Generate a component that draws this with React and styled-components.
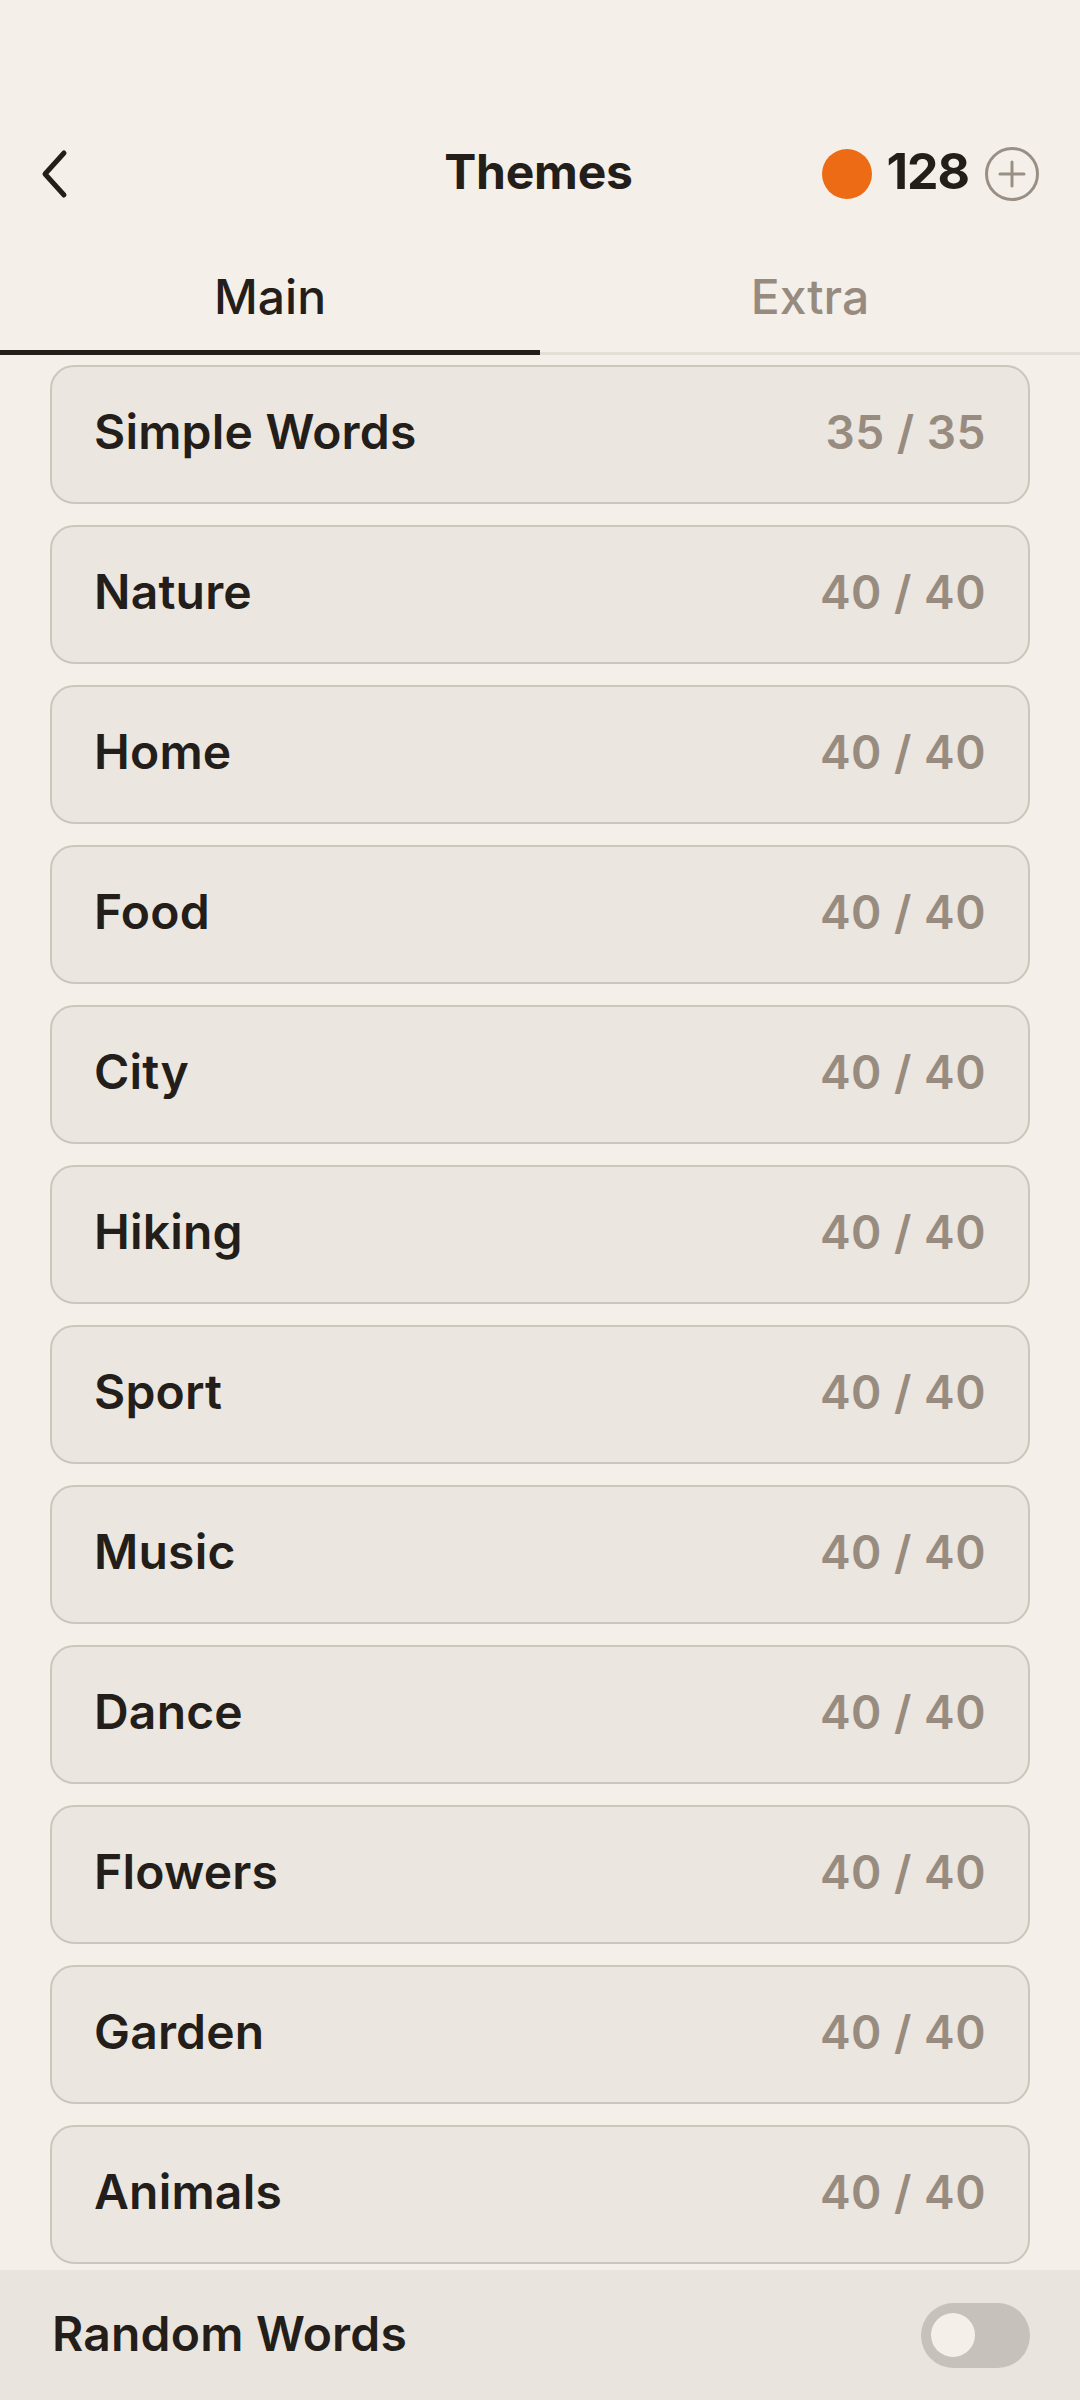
import React, { useState } from "react";
import styled, { createGlobalStyle } from "styled-components";

const Global = createGlobalStyle`
  html, body { margin: 0; padding: 0; background: #f4f0e9; }
  body { font-family: Inter, "Noto Sans", "Liberation Sans", sans-serif; color: #231e19; }
  * { box-sizing: border-box; }
`;

const Page = styled.div`
  width: 1080px;
  min-height: 2400px;
  display: flex;
  flex-direction: column;
  background: #f4f0e9;
`;

const Header = styled.header`
  margin-top: 116px;
  height: 114px;
  padding-bottom: 4px;
  display: grid;
  grid-template-columns: 1fr auto 1fr;
  align-items: center;
  padding-left: 38px;
  padding-right: 41px;
`;

const BackButton = styled.button`
  justify-self: start;
  background: none;
  border: none;
  padding: 0;
  width: 32px;
  height: 50px;
  display: flex;
  align-items: center;
  color: #231e19;
  margin-top: 6px;
`;

const Title = styled.h1`
  margin: 0;
  font-size: 48px;
  font-weight: 700;
  letter-spacing: -0.2px;
  color: #231e19;
`;

const Wallet = styled.div`
  justify-self: end;
  display: flex;
  align-items: center;
`;

const Coin = styled.span`
  width: 50px;
  height: 50px;
  border-radius: 50%;
  background: #ec6b14;
  margin-right: 14px;
  margin-top: 6px;
`;

const Amount = styled.span`
  font-size: 50px;
  font-weight: 700;
  letter-spacing: -1px;
  margin-right: 16px;
  line-height: 1;
`;

const AddButton = styled.button`
  width: 54px;
  height: 54px;
  border-radius: 50%;
  border: 3px solid #9a8f84;
  background: transparent;
  padding: 0;
  display: flex;
  align-items: center;
  justify-content: center;
  color: #9a8f84;
  margin-top: 6px;
`;

const TabBar = styled.nav`
  display: flex;
  box-shadow: inset 0 -3px 0 #e3ded6;
`;

const Tab = styled.button`
  flex: 1;
  height: 125px;
  padding: 12px 0 0;
  background: none;
  border: none;
  border-bottom: 5px solid ${(p) => (p.$active ? "#231e19" : "transparent")};
  font-family: inherit;
  font-size: 48px;
  font-weight: 500;
  color: ${(p) => (p.$active ? "#231e19" : "#978b7f")};
`;

const List = styled.div`
  display: flex;
  flex-direction: column;
  gap: 21px;
  padding: 10px 50px 6px;
`;

const Card = styled.div`
  height: 139px;
  display: flex;
  align-items: center;
  justify-content: space-between;
  padding: 0 42px 6px;
  background: #ebe6df;
  border: 2.5px solid #cdc6bb;
  border-radius: 24px;
`;

const CardName = styled.span`
  font-size: 48px;
  font-weight: 600;
  letter-spacing: 0.2px;
  color: #231e19;
`;

const CardCount = styled.span`
  font-size: 46px;
  font-weight: 600;
  color: #988c80;
  letter-spacing: 0.5px;
`;

const BottomBar = styled.div`
  height: 130px;
  display: flex;
  align-items: center;
  justify-content: space-between;
  padding: 0 50px 0 52px;
  background: #e9e4dd;
`;

const BottomLabel = styled.span`
  font-size: 48px;
  font-weight: 600;
  letter-spacing: 0.2px;
  color: #231e19;
  margin-bottom: 4px;
`;

const Switch = styled.button`
  width: 109px;
  height: 65px;
  border-radius: 33px;
  border: none;
  padding: 0 10px;
  background: #c6c1ba;
  display: flex;
  align-items: center;
  justify-content: ${(p) => (p.$on ? "flex-end" : "flex-start")};
`;

const Knob = styled.span`
  width: 44px;
  height: 44px;
  border-radius: 50%;
  background: #f4f0e9;
`;

const themes = [
  ["Simple Words", "35 / 35"],
  ["Nature", "40 / 40"],
  ["Home", "40 / 40"],
  ["Food", "40 / 40"],
  ["City", "40 / 40"],
  ["Hiking", "40 / 40"],
  ["Sport", "40 / 40"],
  ["Music", "40 / 40"],
  ["Dance", "40 / 40"],
  ["Flowers", "40 / 40"],
  ["Garden", "40 / 40"],
  ["Animals", "40 / 40"],
];

export default function App() {
  const [tab, setTab] = useState("main");
  const [random, setRandom] = useState(false);
  return (
    <Page>
      <Global />
      <Header>
        <BackButton aria-label="Back">
          <svg width="32" height="50" viewBox="0 0 32 50" fill="none">
            <path d="M26 4 L7 25 L26 46" stroke="currentColor" strokeWidth="5" strokeLinecap="round" strokeLinejoin="round" />
          </svg>
        </BackButton>
        <Title>Themes</Title>
        <Wallet>
          <Coin />
          <Amount>128</Amount>
          <AddButton aria-label="Add">
            <svg width="30" height="30" viewBox="0 0 30 30">
              <path d="M15 3 V27 M3 15 H27" stroke="currentColor" strokeWidth="3" strokeLinecap="round" />
            </svg>
          </AddButton>
        </Wallet>
      </Header>
      <TabBar>
        <Tab $active={tab === "main"} onClick={() => setTab("main")}>Main</Tab>
        <Tab $active={tab === "extra"} onClick={() => setTab("extra")}>Extra</Tab>
      </TabBar>
      <List>
        {themes.map(([name, count]) => (
          <Card key={name}>
            <CardName>{name}</CardName>
            <CardCount>{count}</CardCount>
          </Card>
        ))}
      </List>
      <BottomBar>
        <BottomLabel>Random Words</BottomLabel>
        <Switch $on={random} onClick={() => setRandom(!random)} aria-label="Random words">
          <Knob />
        </Switch>
      </BottomBar>
    </Page>
  );
}
